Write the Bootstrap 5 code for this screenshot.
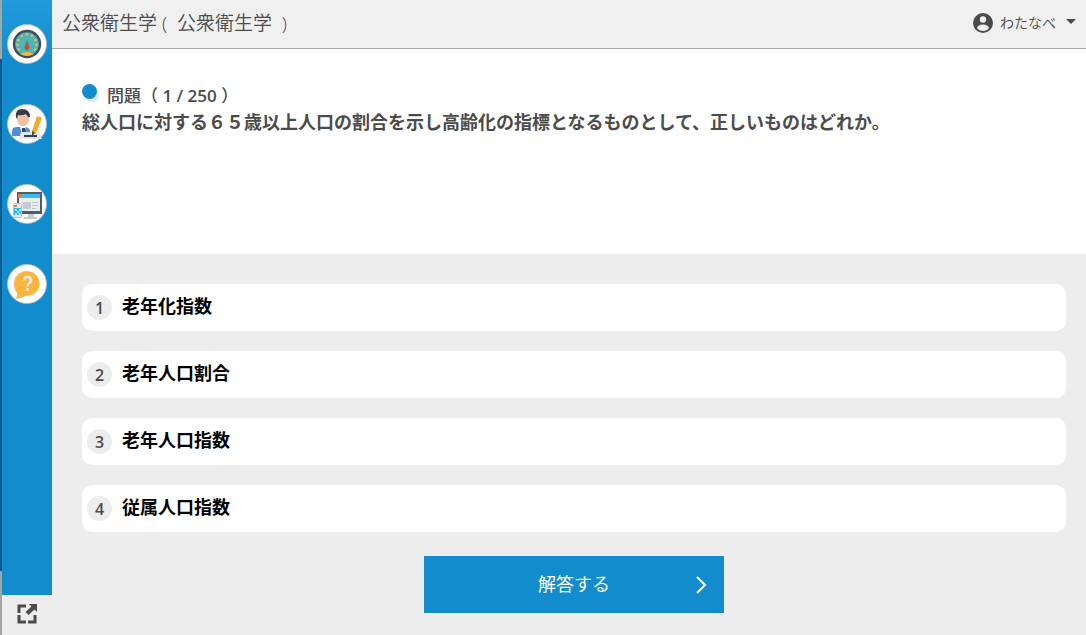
<!DOCTYPE html>
<html lang="ja">
<head>
<meta charset="utf-8">
<meta name="viewport" content="width=device-width, initial-scale=1">
<title>公衆衛生学</title>
<link href="https://cdn.jsdelivr.net/npm/bootstrap@5.3.0/dist/css/bootstrap.min.css" rel="stylesheet">
<style>
  body { font-family: "Open Sans", "Noto Sans CJK JP", sans-serif; background: #ededed; color: #4b4b4b; }
  .side { width: 52px; border-left: 2px solid #0a5c8e; border-image: linear-gradient(#a5a5a5 0 60px, #0a5c8e 60px calc(100% - 65px), #a5a5a5 calc(100% - 65px)) 1; }
  .side-menu { background: linear-gradient(#209bdc, #128ccc 60px); padding-top: 24px; gap: 40px; }
  .side-icon { width: 40px; height: 40px; background: #fff; border: 1px solid #aebfcb; }
  .side-foot { height: 40px; padding-bottom: 2px; color: #4b4b4b; }
  .topbar { height: 49px; background: #f0f0f0; border-bottom: 1px solid #a8a8a8; padding: 0 10px 2px; }
  .course { font-size: 19px; line-height: 24px; font-weight: 350; white-space: pre; }
  .user-btn { font-size: 14px; line-height: 20px; font-weight: 350; color: #4b4b4b; gap: 7px; }
  .caret { border: 5px solid transparent; border-top-color: #4b4b4b; border-bottom: 0; margin: 0 0 4px 3px; }
  .question { min-height: 205px; background: #fff; padding: 33px 30px 20px; }
  .counter { font-size: 17px; line-height: 27px; font-weight: 500; gap: 10px; }
  .count { font-weight: 600; }
  .dot { width: 15px; height: 15px; margin-bottom: 8px; border-radius: 50%; background: #128ccc; box-shadow: 3px 4px 0 -1px #dfe6f5; }
  .question-text { font-size: 18px; line-height: 27px; font-weight: 700; }
  .answers { padding: 30px 20px 22px 30px; }
  .choices { gap: 20px; }
  .choice { height: 47px; border: 0; border-radius: 10px; background: #fff; color: #000; padding: 0 5px; gap: 10px; font-size: 18px; line-height: 27px; font-weight: 700; }
  .choice-label { padding-bottom: 2px; }
  .num { width: 25px; height: 25px; border-radius: 50%; background: #ededed; color: #4b4b4b; font-size: 16px; line-height: 27px; font-weight: 600; }
  .submit { width: 300px; height: 57px; margin-top: 24px; border: 0; background: #128ccc; color: #fff; font-size: 18px; }
  .submit svg { position: absolute; right: 16px; top: 20px; }
</style>
</head>
<body>
<div class="d-flex min-vh-100">
  <aside class="side d-flex flex-column flex-shrink-0">
    <nav class="side-menu flex-grow-1 d-flex flex-column align-items-center" aria-label="メニュー">
      <a href="#" class="side-icon rounded-circle d-flex align-items-center justify-content-center" aria-label="ダッシュボード">
        <svg width="30" height="30" viewBox="0 0 30 30"><circle cx="15" cy="15" r="13" fill="#4bb5b7" stroke="#414b61" stroke-width="2.4"/><path d="M8 25q7-4 14 0-7 4-14 0" fill="#f7b737"/><g fill="#f2b844"><circle cx="15" cy="5.500" r="1.300"/><circle cx="10" cy="7" r="1.300"/><circle cx="20" cy="7" r="1.300"/><circle cx="6.500" cy="11" r="1.300"/><circle cx="23.500" cy="11" r="1.300"/><circle cx="5.500" cy="16" r="1.300"/><circle cx="24.500" cy="16" r="1.300"/><circle cx="7" cy="20.500" r="1.300"/><circle cx="23" cy="20.500" r="1.300"/></g><path d="M15 11l2 6a2.500 2.500 0 1 1-4 0z" fill="#b5523d"/></svg>
      </a>
      <a href="#" class="side-icon rounded-circle d-flex align-items-center justify-content-center" aria-label="学習">
        <svg width="32" height="32" viewBox="0 0 32 32"><path d="M1 28v-5q0-4 5-4h9q4 1 4 5v4z" fill="#4e8fd6"/><path d="M9 18h6l-1 5-2 5-2-5z" fill="#fff"/><path d="M11 20h3l1 6-2 3-2-3z" fill="#344a6b"/><path d="M5.500 8q0-5 6.500-5t6 5v4q-1 6-6 6t-6-6z" fill="#f4c19e"/><path d="M5 9q-1-8 6-8 8 0 8 8h-2l-2-3q-4 2-8 1l-1 4z" fill="#343c4c"/><path d="M10 24h18l3 7H8z" fill="#e2e5e9"/><path d="M13 27h13v2H13z" fill="#334156"/><path d="M26 8l5 2-6 15-3 2-1-4z" fill="#f7a928"/><path d="M21 23l3 2-3 3z" fill="#424653"/></svg>
      </a>
      <a href="#" class="side-icon rounded-circle d-flex align-items-center justify-content-center" aria-label="教材">
        <svg width="32" height="32" viewBox="0 0 32 32"><path d="M6 4h25v22H6z" fill="#555b67"/><path d="M8 6h21v17H8z" fill="#e9edf0"/><path d="M7 6h22v4H7z" fill="#35bdf0"/><path d="M7 6h4v4H7z" fill="#e57b45"/><path d="M12 14h8v7h-8z" fill="#c5cbd0"/><path d="M21 14.500h6m-6 3h6m-6 3h4" stroke="#bec5cb"/><path d="M17 26h6v3h3v2H13v-2h4z" fill="#c6cbd1"/><rect x="2.500" y="15.500" width="8" height="14" rx="1" fill="#e4e9ed" stroke="#bbc4cc"/><path d="M3 20h7v7H3z" fill="#2bb5ea"/><path d="M4 21h2v2H4zm4 0h2v2H8zm-2 2h2v2H6zm-2 2h2v2H4zm4 0h2v2H8z" fill="#a3e0f7"/><path d="M3 17h3v2H3z" fill="#e57b45"/></svg>
      </a>
      <a href="#" class="side-icon rounded-circle d-flex align-items-center justify-content-center" aria-label="ヘルプ">
        <svg width="32" height="32" viewBox="0 0 32 32"><path d="M16 3a13 12 0 1 1-2 25q-5 3-10 3 3-3 2-6Q3 21 3 16A13 13 0 0 1 16 3" fill="#fbb53c"/><path d="M13 12.500q0-3.500 3.500-3.500t3.500 3.500q0 2-2.500 3-1 .5-1 3" fill="none" stroke="#f1eadf" stroke-width="2.500"/><circle cx="16.500" cy="21.500" r="1.500" fill="#f1eadf"/></svg>
      </a>
    </nav>
    <a href="#" class="side-foot d-flex align-items-center justify-content-center" aria-label="全画面">
      <svg width="20" height="20" viewBox="0 0 20 20"><path d="M9 2H2v7M2 11v7h7M11 18h7v-7" fill="none" stroke="currentColor" stroke-width="3"/><path d="M20 0v8l-2.500-2.500-6 5.500-3-3 6-5.500L12 0z" fill="currentColor"/></svg>
    </a>
  </aside>
  <div class="flex-grow-1 d-flex flex-column">
    <header class="topbar d-flex align-items-center justify-content-between">
      <h1 class="course m-0">公衆衛生学 (  公衆衛生学  )</h1>
      <button type="button" class="user-btn btn p-0 border-0 d-flex align-items-center">
        <svg width="20" height="20" viewBox="0 0 20 20"><circle cx="10" cy="10" r="10" fill="currentColor"/><circle cx="10" cy="6.500" r="3.200" fill="#f0f0f0"/><path d="M4 15q1-3.500 6-3.500t6 3.500q-2 3-6 3t-6-3" fill="#f0f0f0"/></svg>
        <span>わたなべ</span><span class="caret"></span>
      </button>
    </header>
    <main>
      <section class="question">
        <div class="counter d-flex align-items-center"><span class="dot"></span><span>問題（<span class="count"> 1 / 250 </span>）</span></div>
        <p class="question-text m-0">総人口に対する６５歳以上人口の割合を示し高齢化の指標となるものとして、正しいものはどれか。</p>
      </section>
      <section class="answers">
        <div class="choices d-grid">
          <button type="button" class="choice w-100 d-flex align-items-center"><span class="num">1</span><span class="choice-label">老年化指数</span></button>
          <button type="button" class="choice w-100 d-flex align-items-center"><span class="num">2</span><span class="choice-label">老年人口割合</span></button>
          <button type="button" class="choice w-100 d-flex align-items-center"><span class="num">3</span><span class="choice-label">老年人口指数</span></button>
          <button type="button" class="choice w-100 d-flex align-items-center"><span class="num">4</span><span class="choice-label">従属人口指数</span></button>
        </div>
        <button type="button" class="submit d-block mx-auto position-relative">解答する
          <svg width="14" height="18" viewBox="0 0 14 18"><path d="M3 1l8 8-8 8" fill="none" stroke="#fff" stroke-width="2"/></svg>
        </button>
      </section>
    </main>
  </div>
</div>
<script src="https://cdn.jsdelivr.net/npm/bootstrap@5.3.0/dist/js/bootstrap.bundle.min.js"></script>
</body>
</html>
